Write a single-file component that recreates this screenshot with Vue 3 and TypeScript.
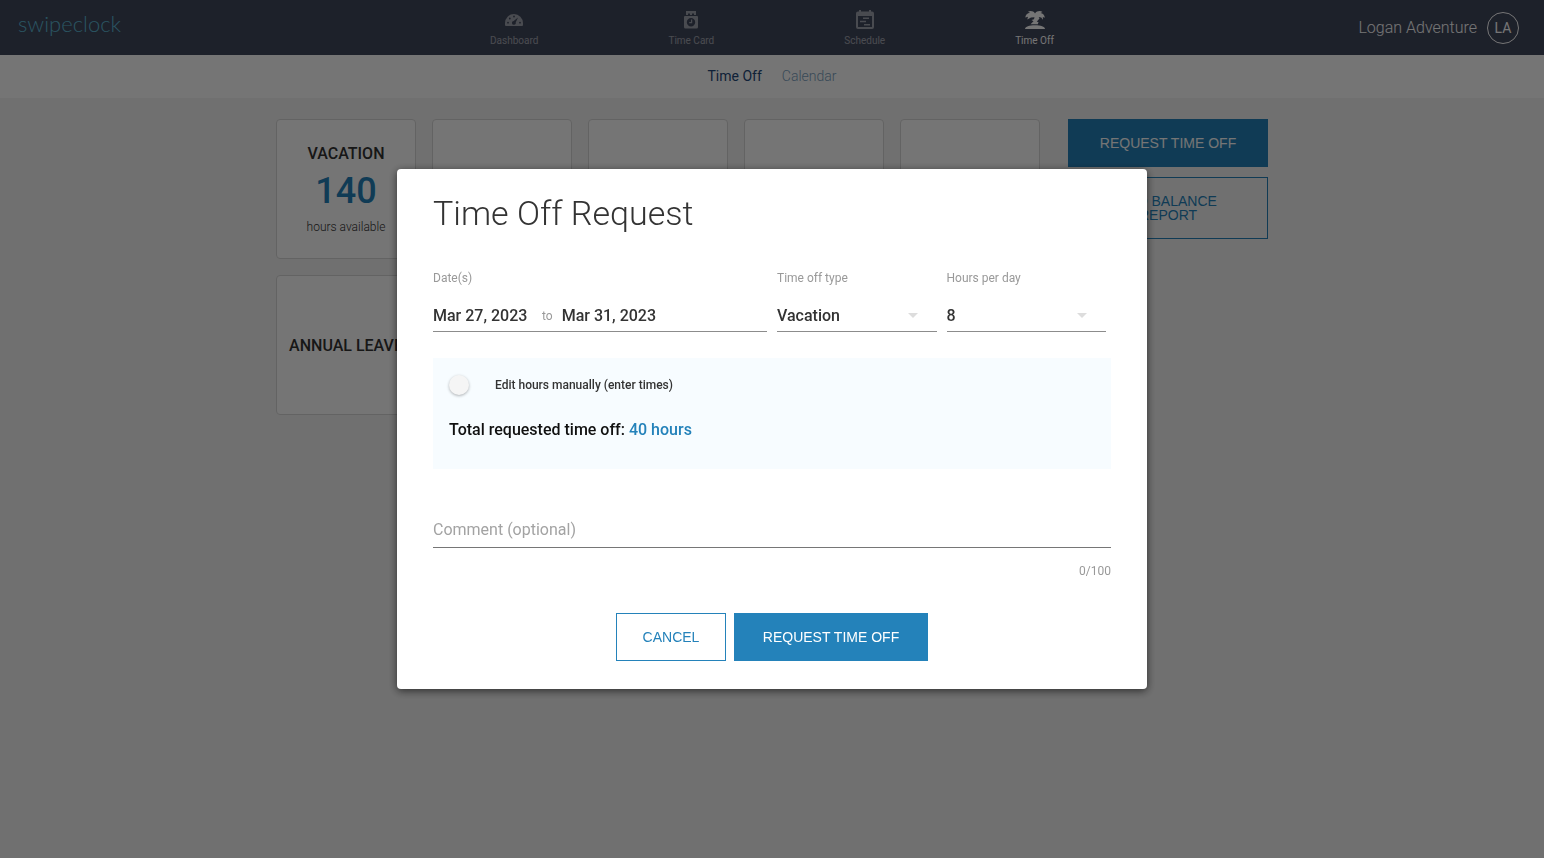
<script setup lang="ts">
import { computed, ref } from 'vue'

type IconName = 'dashboard' | 'timecard' | 'schedule' | 'timeoff'

interface NavItem {
  label: string
  icon: IconName
  active: boolean
}

interface Balance {
  name: string
  hours: number | null
}

const navItems: NavItem[] = [
  { label: 'Dashboard', icon: 'dashboard', active: false },
  { label: 'Time Card', icon: 'timecard', active: false },
  { label: 'Schedule', icon: 'schedule', active: false },
  { label: 'Time Off', icon: 'timeoff', active: true },
]

const balances: Balance[] = [
  { name: 'VACATION', hours: 140 },
  { name: '', hours: null },
  { name: '', hours: null },
  { name: '', hours: null },
  { name: '', hours: null },
  { name: 'ANNUAL LEAVE', hours: null },
]

const startDate = ref('Mar 27, 2023')
const endDate = ref('Mar 31, 2023')
const timeOffType = ref('Vacation')
const hoursPerDay = ref(8)
const manual = ref(false)
const comment = ref('')
const days = 5
const totalHours = computed(() => hoursPerDay.value * days)
</script>

<template>
  <div class="page">
    <header class="topbar">
      <a class="logo" href="#">swipeclock</a>
      <nav class="main-nav" aria-label="Main">
        <a
          v-for="item in navItems"
          :key="item.label"
          class="nav-item"
          :class="{ active: item.active }"
          href="#"
        >
          <svg v-if="item.icon === 'dashboard'" class="nav-icon" viewBox="0 0 20 20" aria-hidden="true">
            <path
              fill-rule="evenodd"
              d="M10 4a9 9 0 0 0-9 9v2q0 1 1 1h16q1 0 1-1v-2a9 9 0 0 0-9-9zM4 11.800a.9.9 0 1 0 .01 1.800a.9.9 0 0 0 0-1.800zM5.800 7.600a.9.9 0 1 0 .01 1.800a.9.9 0 0 0 0-1.800zM10 5.600a.9.9 0 1 0 .01 1.800a.9.9 0 0 0 0-1.800zM16 11.800a.9.9 0 1 0 .01 1.800a.9.9 0 0 0 0-1.800zM14 7.600L9.700 11a1.900 1.900 0 1 0 2 1.400z"
            />
          </svg>
          <svg v-else-if="item.icon === 'timecard'" class="nav-icon" viewBox="0 0 20 20" aria-hidden="true">
            <path
              fill-rule="evenodd"
              d="M5 1h10v4h-2V3.500h-2V5H9V3.500H7V5H5zM4 6h12q1 0 1 1v10q0 1.500-1.500 1.500h-11Q3 18.500 3 17V7q0-1 1-1zM10 8a4.200 4.200 0 1 0 .01 8.400a4.200 4.200 0 0 0 0-8.400z"
            />
            <path d="M10 9.500h1.200v3.700H8.200v-1.100H10z" />
          </svg>
          <svg v-else-if="item.icon === 'schedule'" class="nav-icon" viewBox="0 0 20 20" aria-hidden="true">
            <path
              fill-rule="evenodd"
              d="M4 0h2v1.500h8V0h2v1.500h1q2 0 2 2V17q0 2-2 2H3q-2 0-2-2V3.500q0-2 2-2h1zM3 6v11h14V6z"
            />
            <path d="M8 7.500h6V9H8zM5 10.800h6v1.500H5zM9 14h6v1.500H9z" />
          </svg>
          <svg v-else class="nav-icon" viewBox="0 0 20 20" aria-hidden="true">
            <path
              d="M10 3.400C8.500.8 5 .3 3 1.800L5 2.800C2.300 3.200.5 5 .3 7.500L3 6.700 2.300 9.500 6 7.500l3.500-.3L9 9.300 6.500 10l2 1.200L5.500 14.200h7.300L13.500 12l-1.800-.2 2.800-3.300-.8-1.500 2.500.5 1.800 2.200-.2-2.700 2 .8C19.700 5 18 3.300 15.500 2.900l2-1C15.500.3 11.800.6 10 3.400z"
            />
            <path d="M0 19c.5-2.500 4-3.700 10-3.700s9.500 1.200 10 3.700z" />
          </svg>
          <span>{{ item.label }}</span>
        </a>
      </nav>
      <div class="user">
        <span>Logan Adventure</span>
        <button class="avatar" type="button" aria-label="Account menu for Logan Adventure">LA</button>
      </div>
    </header>

    <nav class="subnav" aria-label="Time off sections">
      <a class="current" href="#">Time Off</a>
      <a href="#">Calendar</a>
    </nav>

    <main class="content">
      <section class="cards">
        <article v-for="(balance, i) in balances" :key="i" class="card">
          <h2 v-if="balance.name">{{ balance.name }}</h2>
          <template v-if="balance.hours !== null">
            <strong>{{ balance.hours }}</strong>
            <p>hours available</p>
          </template>
        </article>
      </section>
      <aside class="actions">
        <button class="btn primary" type="button">REQUEST TIME OFF</button>
        <button class="btn outline report" type="button">PTO BALANCE REPORT</button>
      </aside>
    </main>

    <div class="overlay">
      <form class="dialog" role="dialog" aria-modal="true" aria-labelledby="dialog-title" @submit.prevent>
        <h1 id="dialog-title">Time Off Request</h1>

        <div class="fields">
          <div class="field">
            <label for="start-date">Date(s)</label>
            <div class="control">
              <input id="start-date" v-model="startDate" class="date" type="text" />
              <label class="to" for="end-date">to</label>
              <input id="end-date" v-model="endDate" class="date" type="text" />
            </div>
          </div>
          <div class="field">
            <label for="type">Time off type</label>
            <div class="control">
              <select id="type" v-model="timeOffType">
                <option>Vacation</option>
                <option>Annual Leave</option>
              </select>
              <svg class="arrow" viewBox="0 0 10 5" aria-hidden="true"><path d="M0 0h10L5 5z" /></svg>
            </div>
          </div>
          <div class="field">
            <label for="hours">Hours per day</label>
            <div class="control">
              <select id="hours" v-model.number="hoursPerDay">
                <option v-for="n in 8" :key="n" :value="n">{{ n }}</option>
              </select>
              <svg class="arrow" viewBox="0 0 10 5" aria-hidden="true"><path d="M0 0h10L5 5z" /></svg>
            </div>
          </div>
        </div>

        <div class="summary">
          <label class="switch">
            <input v-model="manual" type="checkbox" />
            <span>Edit hours manually (enter times)</span>
          </label>
          <p class="total">Total requested time off: <b>{{ totalHours }} hours</b></p>
        </div>

        <input
          v-model="comment"
          class="comment"
          type="text"
          maxlength="100"
          placeholder="Comment (optional)"
          aria-label="Comment (optional)"
        />
        <div class="counter">{{ comment.length }}/100</div>

        <div class="buttons">
          <button class="btn outline cancel" type="button">CANCEL</button>
          <button class="btn primary submit" type="submit">REQUEST TIME OFF</button>
        </div>
      </form>
    </div>
  </div>
</template>

<style>
body {
  margin: 0;
}
</style>

<style scoped>
* {
  box-sizing: border-box;
}

.page {
  min-height: 100vh;
  background: #f4f4f4;
  color: #333;
  font-family: Roboto, "Liberation Sans", sans-serif;
}

h1,
h2,
p {
  margin: 0;
}

a {
  text-decoration: none;
}

.topbar {
  display: grid;
  grid-template-columns: 1fr auto 1fr;
  align-items: center;
  height: 55px;
  background: #41485d;
}

.logo {
  padding: 0 0 8px 18px;
  color: #5cb8d4;
  font: 300 22px/28px Lato, sans-serif;
}

.main-nav {
  display: flex;
  gap: 130px;
  padding-top: 2px;
}

.nav-item {
  display: flex;
  flex-direction: column;
  align-items: center;
  gap: 5px;
  color: #fff;
  font-size: 10px;
  line-height: 12px;
  opacity: 0.5;
}

.nav-item.active {
  opacity: 1;
}

.nav-icon {
  width: 20px;
  height: 20px;
  fill: currentColor;
}

.user {
  display: flex;
  align-items: center;
  justify-content: flex-end;
  gap: 10px;
  padding-right: 25px;
  color: #fff;
  font-size: 16px;
  font-weight: 300;
}

.avatar {
  width: 32px;
  height: 32px;
  padding: 0;
  border: 1px solid #fff;
  border-radius: 50%;
  background: transparent;
  color: #fff;
  font: 400 14px Roboto, sans-serif;
}

.subnav {
  display: flex;
  justify-content: center;
  gap: 20px;
  height: 43px;
  background: #fff;
  font-size: 14px;
  font-weight: 300;
  line-height: 43px;
}

.subnav a {
  color: #7b9fbe;
}

.subnav .current {
  color: #24497a;
  font-weight: 400;
}

.content {
  display: flex;
  justify-content: center;
  gap: 28px;
  padding: 21px 20px;
}

.cards {
  display: grid;
  grid-template-columns: repeat(5, 140px);
  grid-auto-rows: 140px;
  gap: 16px;
}

.card {
  display: flex;
  flex-direction: column;
  align-items: center;
  justify-content: center;
  padding-top: 1px;
  border: 1px solid #d8d8d8;
  border-radius: 4px;
  background: #fff;
  white-space: nowrap;
}

.card h2 {
  font-size: 16px;
  font-weight: 500;
  line-height: 20px;
}

.card strong {
  color: #2482ba;
  font-size: 36px;
  font-weight: 500;
  line-height: 54px;
}

.card p {
  font-size: 12px;
  font-weight: 300;
  line-height: 18px;
}

.actions {
  display: flex;
  flex-direction: column;
  gap: 10px;
  width: 200px;
}

.btn {
  height: 48px;
  padding: 0 24px;
  border: 1px solid #2482ba;
  font: 400 14px/14px "Liberation Sans", Arial, sans-serif;
}

.primary {
  background: #2482ba;
  color: #fff;
}

.outline {
  background: transparent;
  color: #2482ba;
}

.report {
  height: 62px;
  padding: 0 40px;
}

.overlay {
  position: fixed;
  inset: 0;
  display: flex;
  align-items: center;
  justify-content: center;
  background: rgba(0, 0, 0, 0.54);
}

.dialog {
  width: 750px;
  max-width: 90%;
  padding: 23px 36px 28px;
  border-radius: 4px;
  background: #fff;
  box-shadow: 0 2px 8px rgba(0, 0, 0, 0.6);
}

.dialog h1 {
  font-size: 34px;
  font-weight: 300;
  line-height: 42px;
}

.fields {
  display: grid;
  grid-template-columns: 2fr 1fr 1fr;
  margin-top: 36px;
}

.field {
  margin: 0 5px;
}

.field:first-child {
  margin-left: 0;
}

.field label {
  display: block;
  color: #999;
  font-size: 12px;
  line-height: 16px;
}

.control {
  display: flex;
  align-items: center;
  gap: 9px;
  height: 46px;
  padding-top: 14px;
  border-bottom: 1px solid #8c8c8c;
}

input,
select {
  padding: 0;
  border: 0;
  outline: 0;
  background: transparent;
  color: #333;
  font: 500 16px/20px Roboto, sans-serif;
}

.date {
  width: 100px;
}

select {
  flex: 1;
  appearance: none;
}

.arrow {
  width: 10px;
  height: 5px;
  margin-right: 19px;
  fill: #ddd;
}

.summary {
  height: 111px;
  margin-top: 26px;
  padding: 16px;
  background: #f7fcff;
}

.switch {
  display: flex;
  align-items: center;
  gap: 26px;
  font-size: 12px;
  font-weight: 500;
  line-height: 22px;
}

.switch input {
  width: 20px;
  height: 20px;
  margin: 0;
  appearance: none;
  border-radius: 50%;
  background: #f5f5f5;
  box-shadow: 0 1px 3px rgba(0, 0, 0, 0.3);
}

.total {
  margin-top: 24px;
  color: #111;
  font-size: 16px;
  font-weight: 500;
  line-height: 20px;
}

.total b {
  color: #2482ba;
  font-weight: 500;
}

.comment {
  display: block;
  width: 100%;
  height: 37px;
  margin-top: 42px;
  border-bottom: 1px solid #767676;
}

.comment::placeholder {
  color: #a3a3a3;
  font-weight: 400;
  opacity: 1;
}

.counter {
  margin-top: 15px;
  color: #999;
  font-size: 12px;
  line-height: 16px;
  text-align: right;
}

.buttons {
  display: flex;
  justify-content: center;
  gap: 8px;
  margin-top: 34px;
}

.cancel {
  min-width: 110px;
}

.submit {
  min-width: 194px;
}
</style>
